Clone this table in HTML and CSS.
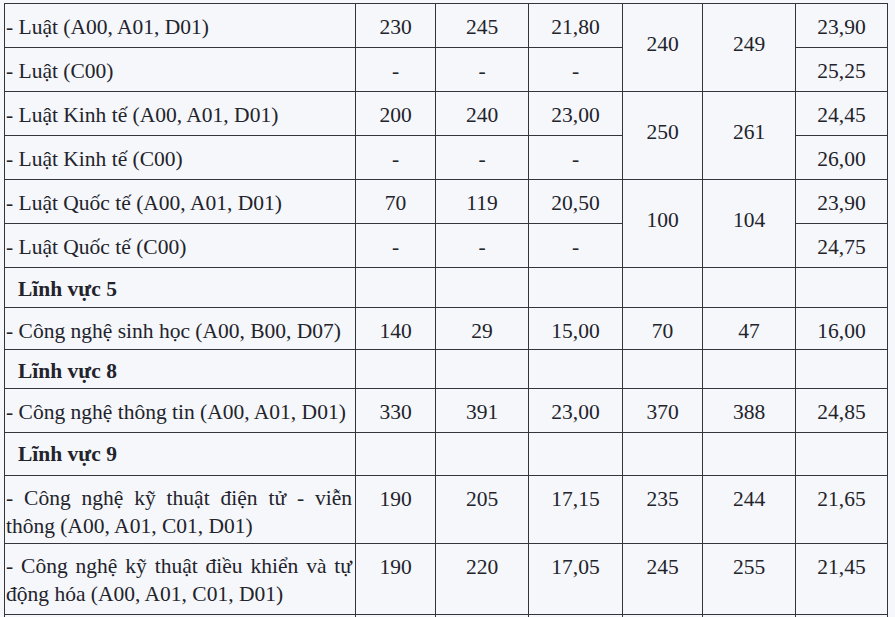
FILE: index.html
```html
<!DOCTYPE html>
<html lang="vi">
<head>
<meta charset="utf-8">
<title>Bảng điểm</title>
<link rel="stylesheet" href="styles.css">
</head>
<body>
<table class="grid">
  <colgroup>
    <col class="c-name"><col class="c-a"><col class="c-b"><col class="c-c"><col class="c-d"><col class="c-e"><col class="c-f">
  </colgroup>
  <tbody>
    <tr class="h44">
      <td class="name">- Luật (A00, A01, D01)</td><td>230</td><td>245</td><td>21,80</td>
      <td class="mid" rowspan="2">240</td><td class="mid" rowspan="2">249</td><td>23,90</td>
    </tr>
    <tr class="h44">
      <td class="name">- Luật (C00)</td><td>-</td><td>-</td><td>-</td><td>25,25</td>
    </tr>
    <tr class="h44">
      <td class="name">- Luật Kinh tế (A00, A01, D01)</td><td>200</td><td>240</td><td>23,00</td>
      <td class="mid" rowspan="2">250</td><td class="mid" rowspan="2">261</td><td>24,45</td>
    </tr>
    <tr class="h44">
      <td class="name">- Luật Kinh tế (C00)</td><td>-</td><td>-</td><td>-</td><td>26,00</td>
    </tr>
    <tr class="h44">
      <td class="name">- Luật Quốc tế (A00, A01, D01)</td><td>70</td><td>119</td><td>20,50</td>
      <td class="mid" rowspan="2">100</td><td class="mid" rowspan="2">104</td><td>23,90</td>
    </tr>
    <tr class="h44">
      <td class="name">- Luật Quốc tế (C00)</td><td>-</td><td>-</td><td>-</td><td>24,75</td>
    </tr>
    <tr class="h40">
      <td class="name group">Lĩnh vực 5</td><td></td><td></td><td></td><td></td><td></td><td></td>
    </tr>
    <tr class="h42">
      <td class="name">- Công nghệ sinh học (A00, B00, D07)</td><td>140</td><td>29</td><td>15,00</td><td>70</td><td>47</td><td>16,00</td>
    </tr>
    <tr class="h39">
      <td class="name group">Lĩnh vực 8</td><td></td><td></td><td></td><td></td><td></td><td></td>
    </tr>
    <tr class="h44">
      <td class="name">- Công nghệ thông tin (A00, A01, D01)</td><td>330</td><td>391</td><td>23,00</td><td>370</td><td>388</td><td>24,85</td>
    </tr>
    <tr class="h43">
      <td class="name group">Lĩnh vực 9</td><td></td><td></td><td></td><td></td><td></td><td></td>
    </tr>
    <tr class="h68">
      <td class="name wrap">- Công nghệ kỹ thuật điện tử - viễn thông (A00, A01, C01, D01)</td><td>190</td><td>205</td><td>17,15</td><td>235</td><td>244</td><td>21,65</td>
    </tr>
    <tr class="h71">
      <td class="name wrap">- Công nghệ kỹ thuật điều khiển và tự động hóa (A00, A01, C01, D01)</td><td>190</td><td>220</td><td>17,05</td><td>245</td><td>255</td><td>21,45</td>
    </tr>
    <tr class="stub">
      <td></td><td></td><td></td><td></td><td></td><td></td><td></td>
    </tr>
  </tbody>
</table>
</body>
</html>
```

FILE: styles.css
```css
html, body {
  margin: 0;
  padding: 0;
  background: #f5f7fa;
  overflow: hidden;
}

body {
  width: 895px;
  height: 617px;
  font-family: "Liberation Serif", "Times New Roman", serif;
  color: #23232c;
}

.grid {
  margin: 3px 0 0 4px;
  border-collapse: collapse;
  table-layout: fixed;
  width: 883px;
  font-size: 21.5px;
  line-height: 28px;
}

.c-name { width: 351px; }
.c-a { width: 80px; }
.c-b { width: 93px; }
.c-c { width: 94px; }
.c-d { width: 80px; }
.c-e { width: 93px; }
.c-f { width: 92px; }

.grid td {
  border: 1px solid #34343c;
  padding: 9px 3px 0 3px;
  text-align: center;
  vertical-align: top;
  white-space: nowrap;
  box-sizing: border-box;
}

.grid td.name {
  text-align: left;
  padding-left: 1px;
}

.grid td.group {
  font-weight: bold;
  padding-left: 13px;
  padding-top: 7px;
}

.grid td.wrap {
  white-space: normal;
  text-align: justify;
  padding-top: 8px;
  padding-right: 3px;
}

.grid td.mid {
  vertical-align: middle;
  padding-top: 0;
  padding-bottom: 8px;
}

.h39 { height: 39px; }
.h40 { height: 40px; }
.h42 { height: 42px; }
.h43 { height: 43px; }
.h44 { height: 44px; }
.h68 { height: 68px; }
.h71 { height: 71px; }

.grid tr.stub td {
  height: 2px;
  padding: 0;
  border-bottom: none;
}
```
